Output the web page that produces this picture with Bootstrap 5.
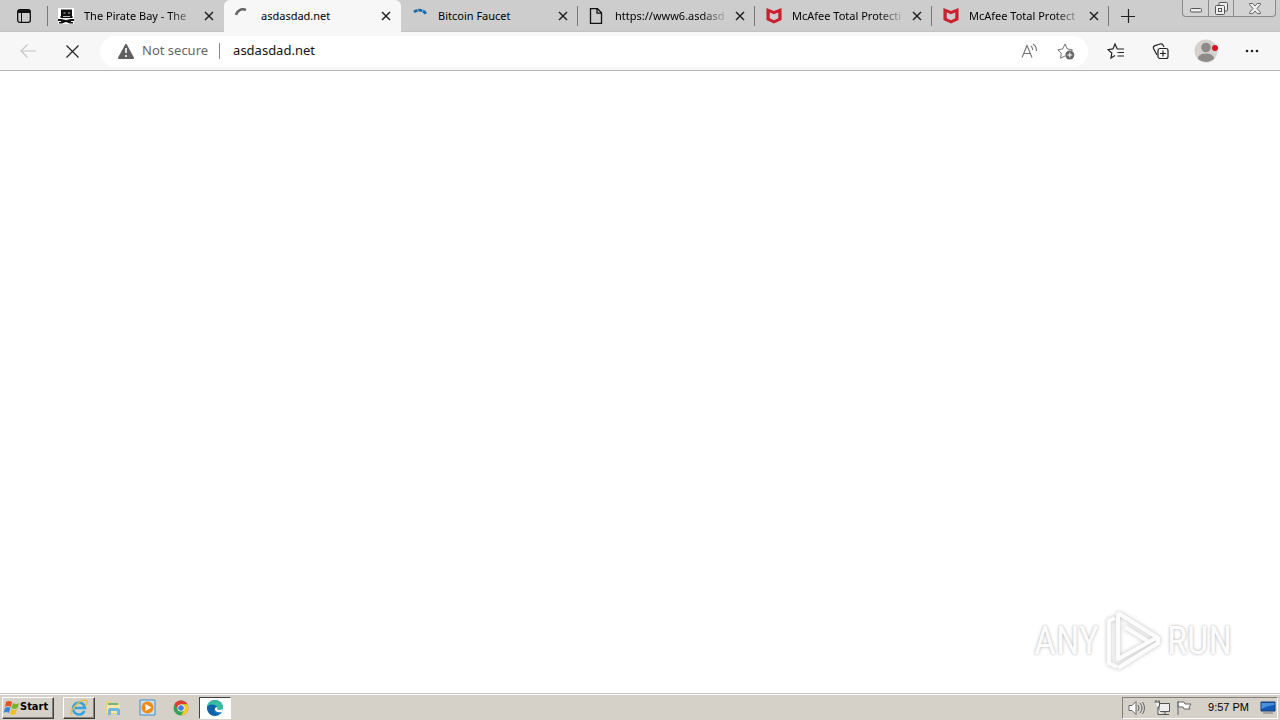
<!DOCTYPE html>
<html lang="en">
<head>
<meta charset="utf-8">
<meta name="viewport" content="width=device-width, initial-scale=1">
<title>asdasdad.net</title>
<link href="https://cdn.jsdelivr.net/npm/bootstrap@5.3.0/dist/css/bootstrap.min.css" rel="stylesheet">
<style>
body{font-family:"Noto Sans","Open Sans",sans-serif;font-size:11px;color:#111;background:#fff}
button{font:inherit;color:inherit;background:none;border:0;padding:0}
svg{display:block;flex:none}
.tabstrip{height:32px;background:#cdcdcd;border-bottom:1px solid #c2c2c2}
.strip-btn{width:47px}
.tabs{max-width:1062px}
.tab{flex:1 1 0;min-width:0;height:31px;padding:0 6px 0 11px}
.tab.parted{background:linear-gradient(#777,#777) right 6px/1px 20px no-repeat}
.tab.first{background:linear-gradient(#777,#777) left 6px/1px 20px no-repeat}
.tab.active{flex-basis:2px;height:32px;background:#f7f7f7;border-radius:6px 6px 0 0}
.tab-title{color:#000;text-decoration:none;overflow:hidden;white-space:nowrap;margin-left:10px;line-height:20px}
.tab-title.faded{-webkit-mask-image:linear-gradient(90deg,#000 86px,transparent 114px);mask-image:linear-gradient(90deg,#000 86px,transparent 114px)}
.win{height:17px;border:1px solid #8a8a8a;border-top:0;border-radius:0 0 4px 4px;background:#d3d3d3;margin-right:4px}
.win button{width:25px;height:16px}
.win button+button{border-left:1px solid #8a8a8a}
.win button:last-child{width:42px}
.toolbar{height:39px;background:#f7f7f7;border-bottom:1px solid #b5b5b5}
.nav-btn{width:44px;height:32px}
.actions{padding-right:6px;margin-left:6px}
.profile{margin:0 2px}
.omnibox{height:31px;background:#fff;border-radius:16px;font-size:13px;padding:0 13px 0 18px}
.secure{color:#666}
.rule{width:1px;height:16px;background:#888;margin:0 13px 0 11px}
.url{border:0;outline:0;padding:0;background:none;min-width:0;color:#111}
.brand-mark{position:absolute;right:48px;bottom:20px;font-family:"Roboto Condensed",Roboto,sans-serif;font-size:38px;line-height:60px;color:#fcfcfc;text-shadow:0 0 3px #aaa}
.brand-mark svg{filter:drop-shadow(0 0 2px #c0c0c0)}
.taskbar{height:27px;background:#d5d0c8;border-top:1px solid #c9c5be;box-shadow:inset 0 1px #fff;font-family:"DejaVu Sans Condensed","DejaVu Sans",sans-serif;padding:2px 2px 1px}
.raised{border:1px solid;border-color:#fff #404040 #404040 #fff;box-shadow:inset -1px -1px #858179;height:22px}
.start{width:52px;font-weight:700;color:#000}
.tasks{gap:2px;margin-left:9px}
.task{width:32px;height:22px}
.pressed{border:1px solid;border-color:#404040 #fff #fff #404040;background:#fff}
.tray{border:1px solid;border-color:#858179 #fff #fff #858179;height:22px;padding:0 1px 0 5px;font-family:"Liberation Sans",sans-serif;color:#000}
.tray time{margin:0 7px 0 16px}
</style>
</head>
<body class="vh-100 d-flex flex-column overflow-hidden">
<svg width="0" height="0" class="position-absolute" aria-hidden="true">
<symbol id="x" viewBox="0 0 10 10"><path d="M1 1l8 8M9 1L1 9" stroke="#222" stroke-width="1.5" fill="none"/></symbol>
<symbol id="shield" viewBox="0 0 16 18"><path d="M0 1l8 3.200L16 1v12.700L8 17.500l-8-3.800zM3.500 5.800v6.100L8 14l4.500-2.100V5.800L8 7.700z" fill="#cb2030" fill-rule="evenodd"/></symbol>
</svg>
<header>
<div class="tabstrip d-flex align-items-start">
<button class="strip-btn h-100 d-flex align-items-center justify-content-center flex-shrink-0" aria-label="Tab actions"><svg width="14" height="14" viewBox="0 0 14 14" fill="none" stroke="#111"><rect x=".7" y=".7" width="12.600" height="12.600" rx="2" stroke-width="1.300"/><path d="M1 2.500h12" stroke-width="3"/><path d="M4.500 3v10"/></svg></button>
<nav class="tabs d-flex flex-grow-1" aria-label="Tabs">
<div class="tab first d-flex align-items-center"><svg width="16" height="16" viewBox="0 0 16 16"><path fill="#fff" d="M0 0h16v16H0z"/><path fill="#111" d="M3 1.500h11V8l1 1-1 1H3L2 9l1-1zM0 11h3l5 1 5-1h3v2h-3v1h2v1.500h-3L8 14l-4 1.500H1V14h2v-1H0z"/><path d="M5.500 4.500h2v1h-2zM10 4.500h2v1h-2zM5 8h7v1H5z" fill="#bbb"/></svg><a href="#" class="tab-title faded flex-grow-1">The Pirate Bay - The</a><button class="p-1" aria-label="Close tab"><svg width="10" height="10"><use href="#x"/></svg></button></div>
<div class="tab active d-flex align-items-center"><svg width="16" height="16" viewBox="0 0 16 16"><path d="M1 7a7 7 0 0 1 10-5" fill="none" stroke="#666" stroke-width="2.500"/></svg><a href="#" class="tab-title flex-grow-1">asdasdad.net</a><button class="p-1" aria-label="Close tab"><svg width="10" height="10"><use href="#x"/></svg></button></div>
<div class="tab parted d-flex align-items-center"><svg width="16" height="16" viewBox="0 0 16 16"><path d="M2 4a8 8 0 0 1 12 2" fill="none" stroke="#1769aa" stroke-width="2.800" stroke-dasharray="4 .7"/></svg><a href="#" class="tab-title flex-grow-1">Bitcoin Faucet</a><button class="p-1" aria-label="Close tab"><svg width="10" height="10"><use href="#x"/></svg></button></div>
<div class="tab parted d-flex align-items-center"><svg width="16" height="16" viewBox="0 0 16 16" fill="none" stroke="#111" stroke-width="1.300"><path d="M1.500.700h7l4 4v10.600h-11zM8 1v4.200h4.500"/></svg><a href="#" class="tab-title faded flex-grow-1">https://www6.asdasd</a><button class="p-1" aria-label="Close tab"><svg width="10" height="10"><use href="#x"/></svg></button></div>
<div class="tab parted d-flex align-items-center"><svg width="16" height="17"><use href="#shield"/></svg><a href="#" class="tab-title faded flex-grow-1">McAfee Total Protecti</a><button class="p-1" aria-label="Close tab"><svg width="10" height="10"><use href="#x"/></svg></button></div>
<div class="tab parted d-flex align-items-center"><svg width="16" height="17"><use href="#shield"/></svg><a href="#" class="tab-title faded flex-grow-1">McAfee Total Protect</a><button class="p-1" aria-label="Close tab"><svg width="10" height="10"><use href="#x"/></svg></button></div>
</nav>
<button class="h-100 ps-1 ms-2 d-flex align-items-center" aria-label="New tab"><svg width="14" height="14" viewBox="0 0 14 14"><path d="M0 7.500h14M7.500 0v14" stroke="#222" stroke-width="1.200"/></svg></button>
<div class="win d-flex ms-auto flex-shrink-0">
<button class="d-flex align-items-center justify-content-center" aria-label="Minimize"><svg width="12" height="12" viewBox="0 0 12 12"><rect x=".5" y="6.500" width="11" height="3.500" rx="1" fill="#eee" stroke="#555"/></svg></button>
<button class="d-flex align-items-center justify-content-center" aria-label="Restore"><svg width="13" height="13" viewBox="0 0 13 13" fill="#eee" stroke="#555"><rect x="4" y=".5" width="8.500" height="8.500" rx="1"/><rect x=".5" y="3.500" width="9" height="9" rx="1"/><rect x="3.500" y="6.500" width="3" height="3"/></svg></button>
<button class="d-flex align-items-center justify-content-center" aria-label="Close"><svg width="12" height="11" viewBox="0 0 12 11"><path d="M.500.500h3.300L6 3 8.200.500h3.300v1L8 5.500l3.500 4v1H8.200L6 8l-2.200 2.500H.500v-1l3.500-4-3.500-4z" fill="#eee" stroke="#666"/></svg></button>
</div>
</div>
<div class="toolbar d-flex align-items-center">
<button class="nav-btn ms-1 ps-1 d-flex align-items-center justify-content-center" aria-label="Back"><svg width="16" height="14" viewBox="0 0 16 14"><path d="M7.500.500L1 7l6.500 6.500M1 7h15" fill="none" stroke="#c6c6c6" stroke-width="1.200"/></svg></button>
<button class="nav-btn ps-1 d-flex align-items-center justify-content-center" aria-label="Stop"><svg width="13" height="13" viewBox="0 0 13 13"><path d="M.5.500l12 12M12.500.500l-12 12" stroke="#222" stroke-width="1.200"/></svg></button>
<div class="omnibox d-flex align-items-center flex-grow-1 ms-2">
<svg width="16" height="15" viewBox="0 0 16 15"><path d="M8 1l7 13H1z" fill="#606060" stroke="#606060" stroke-width="2" stroke-linejoin="round"/><path d="M8 4v5M8 11v2" stroke="#fff" stroke-width="1.600"/></svg>
<label for="address" class="secure ms-2">Not secure</label><span class="rule"></span>
<input id="address" class="url flex-grow-1" type="text" value="asdasdad.net">
<button aria-label="Read aloud"><svg width="17" height="17" viewBox="0 0 17 17" fill="none" stroke="#747474" stroke-width="1.100"><path d="M2 14.500L7 2.500l5 12M4 10.500h6.300M11 3c1.200 1 1.700 2 1.700 4M13 1c2.500 1.500 3.500 4 3.500 7"/></svg></button>
<button class="ms-3 ps-1" aria-label="Add to favorites"><svg width="18" height="18" viewBox="0 0 18 18" fill="none" stroke="#747474"><path d="M8 14l-4.500 2.200.8-5L.8 7.800l4.900-.8L8 2l2.300 5 5.200.8-1.500 2"/><circle cx="12.800" cy="13" r="4.500" fill="#666" stroke="none"/><path d="M12.800 10.500v5M10.300 13h5" stroke="#fff"/></svg></button>
</div>
<div class="actions d-flex align-items-center">
<button class="nav-btn d-flex align-items-center justify-content-center" aria-label="Favorites"><svg width="18" height="18" viewBox="0 0 18 18" fill="none" stroke="#222" stroke-width="1.200"><path d="M8 13.500L4 16l.8-5L1 7.600l5-.7L8 2l2.200 5H17M10.500 10.500H17M10.500 14H17"/></svg></button>
<button class="nav-btn d-flex align-items-center justify-content-center" aria-label="Collections"><svg width="17" height="17" viewBox="0 0 17 17" fill="none" stroke="#222" stroke-width="1.200"><path d="M5 12L1.500 5.500Q.8 3.500 3 2.600L8 1Q10 .5 11 2l1 2"/><rect x="6" y="5.500" width="10" height="10" rx="2" fill="#f7f7f7"/><path d="M11 7.500v6M8 10.500h6"/></svg></button>
<button class="nav-btn profile d-flex align-items-center justify-content-center" aria-label="Profile"><svg width="26" height="24" viewBox="0 0 26 24"><circle cx="13" cy="12" r="11.500" fill="#d4d1ce"/><circle cx="13" cy="8.500" r="4.800" fill="#8d8a87"/><path d="M5 20Q5 14.500 13 14.500T21 20Q13 26 5 20" fill="#8d8a87"/><circle cx="22" cy="9" r="3" fill="#d9141e"/></svg></button>
<button class="nav-btn d-flex align-items-center justify-content-center" aria-label="Settings and more"><svg width="14" height="4" viewBox="0 0 14 4" fill="#222"><circle cx="2" cy="2" r="1.300"/><circle cx="7" cy="2" r="1.300"/><circle cx="12" cy="2" r="1.300"/></svg></button>
</div>
</div>
</header>
<main class="flex-grow-1 position-relative">
<div class="brand-mark d-flex align-items-center"><span>ANY</span><svg class="mx-1" width="60" height="64" viewBox="0 0 60 64" fill="none" stroke="#fcfcfc" stroke-width="4" stroke-linejoin="round"><path d="M12 9l-6 3v42l8 4M15 4l40 25M15 4v46l40-22M22 18l24 15M15 59l40-25v-6"/></svg><span>RUN</span></div>
</main>
<footer class="taskbar d-flex align-items-center">
<button class="raised start d-flex align-items-center"><svg width="17" height="16" viewBox="0 0 17 16"><path d="M3 2q3-2 6 0L8 7Q5 5 2 7z" fill="#e85325"/><path d="M10 3q3 2 6 0l-1.500 5q-3 2-6 0z" fill="#78b52b"/><path d="M2 8q3-2 5.500 0L6 13q-3-2-5.500 0z" fill="#3f86d2"/><path d="M8.500 9q3 2 5.500 0l-1.500 5q-3 2-5.500 0z" fill="#f5bd20"/></svg>Start</button>
<div class="tasks d-flex">
<button class="raised task d-flex align-items-center justify-content-center" aria-label="Internet Explorer"><svg width="18" height="18" viewBox="0 0 18 18" fill="none"><path d="M14.500 12a6 6 0 1 1 .5-3H5" stroke="#35a3dd" stroke-width="2.500"/><path d="M2 16Q-1 13 6 6T17 2q1 2-2 5" stroke="#e9b83a" stroke-width="1.300"/></svg></button>
<button class="task d-flex align-items-center justify-content-center" aria-label="Explorer"><svg width="17" height="17" viewBox="0 0 17 17"><path d="M1 2h5l1 2h8v11H1z" fill="#ead47d"/><path d="M3 4h10v3H3z" fill="#73b67b"/><path d="M2 6h13v8H2z" fill="#f5e7a7"/><path d="M3 16v-5q0-2 2-2h8q2 0 2 2v5h-3v-4H6v4z" fill="#6eb7df"/></svg></button>
<button class="task d-flex align-items-center justify-content-center" aria-label="Media Player"><svg width="17" height="17" viewBox="0 0 17 17"><path d="M1 1h15v15H1z" fill="#c8e0f4" stroke="#4b8dc4"/><circle cx="8.500" cy="8.500" r="6" fill="#f28a15"/><path d="M6.500 5v7l6-3.500z" fill="#fff"/></svg></button>
<button class="task d-flex align-items-center justify-content-center" aria-label="Chrome"><svg width="16" height="16" viewBox="0 0 16 16"><circle cx="8" cy="8" r="7.500" fill="#35a554"/><path d="M1.500 4.200A7.500 7.500 0 0 1 14.500 4.200H8L4.800 10z" fill="#e33d31"/><path d="M14.500 4.200A7.500 7.500 0 0 1 8 15.500L11.300 9.800 8 4.200z" fill="#f9c925"/><circle cx="8" cy="8" r="3.600" fill="#fff"/><circle cx="8" cy="8" r="2.800" fill="#3c7de6"/></svg></button>
<button class="task pressed d-flex align-items-center justify-content-center" aria-label="Edge"><svg width="18" height="18" viewBox="0 0 18 18"><circle cx="9" cy="9" r="8" fill="#167bc4"/><path d="M1 8C2-1 16-1 17 8c0 5-6 4-6 2 2-4-5-6-10-2" fill="#38bda0"/><path d="M1 8c3-4 9-3 9 1-4 1-2 6 3 6-5 4-12 0-12-7" fill="#1260a8"/><path d="M9 9q-1 5 7 4l1-3q-5 2-6 0 1-1 0-2z" fill="#fff"/></svg></button>
</div>
<div class="tray ms-auto d-flex align-items-center">
<svg width="18" height="16" viewBox="0 0 18 16" fill="#fff" stroke="#666"><path d="M1 5.500h3l4-4v13l-4-4H1z"/><path d="M10 5q2 3 0 6M12 3q4 5 0 10M14.500 2q4 6 0 12" fill="none"/></svg>
<svg class="ms-2" width="17" height="16" viewBox="0 0 17 16" fill="#eee" stroke="#555"><path d="M5 3.500h10.500v8H5zM7 14.500h8M11 12v2"/><path d="M.5 2h5v4L4 7v7.500h4M2 0v2M5 0v2"/></svg>
<svg class="ms-1" width="17" height="16" viewBox="0 0 17 16" fill="#fff" stroke="#666"><path d="M3 1v14M3 2h6l1 2h6l-2 3 1 2H9L8 7H3z"/></svg>
<time>9:57 PM</time>
<svg class="ms-1" width="16" height="14" viewBox="0 0 16 14"><path d="M1 1h14v9H1z" fill="#1558b5" stroke="#153b70"/><path d="M1.500 2h13v2Q8 4 1.500 8z" fill="#4a91dd"/><path d="M3 12h10" stroke="#777"/></svg>
</div>
</footer>
<script src="https://cdn.jsdelivr.net/npm/bootstrap@5.3.0/dist/js/bootstrap.bundle.min.js"></script>
</body>
</html>
